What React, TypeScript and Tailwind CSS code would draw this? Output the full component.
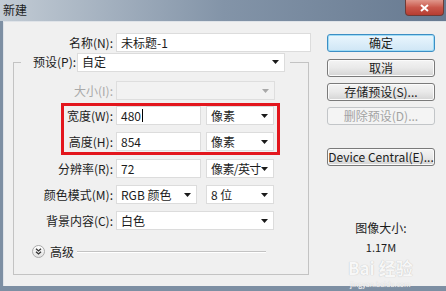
import React from 'react';

const FONT = "font-['Noto_Sans_CJK_SC','Noto_Sans',sans-serif]";

function Caret({ disabled = false }: { disabled?: boolean }) {
  return (
    <svg width="7" height="4" viewBox="0 0 7 4" className="shrink-0">
      <path d="M0 0 H7 L3.5 4 Z" fill={disabled ? '#a8a8a8' : '#1a1a1a'} />
    </svg>
  );
}

function Field({ w, value, select, disabled, caret, tight }: { w: string; value?: string; select?: boolean; disabled?: boolean; caret?: boolean; tight?: boolean }) {
  return (
    <div
      className={`${w} h-[19px] flex items-center justify-between pl-[4px] pr-[5px] border ${
        disabled ? 'bg-[#f2f2f2] border-[#dedede]' : 'bg-white border-[#dcdcdc]'
      }`}
    >
      <span className={`whitespace-nowrap text-[12px] leading-none text-[#1c1c1c] flex items-center ${tight ? 'tracking-[-0.6px]' : ''}`}>
        {value}
        {caret && <span className="inline-block w-px h-[13px] bg-black ml-px" />}
      </span>
      {select && <Caret disabled={disabled} />}
    </div>
  );
}

function Row({ label, disabled, children }: { label: string; disabled?: boolean; children: React.ReactNode }) {
  return (
    <div className="flex items-center h-[19px]">
      <div className={`w-[99px] text-right text-[12px] leading-none ${disabled ? 'text-[#a9a9a9]' : 'text-[#1c1c1c]'}`}>{label}</div>
      <div className="ml-[3px] flex items-center gap-[5px]">{children}</div>
    </div>
  );
}

function Button({ label, primary, disabled }: { label: string; primary?: boolean; disabled?: boolean }) {
  const tone = disabled
    ? 'border-[#c2c5c8] bg-[#f4f4f4] text-[#a3a3a3]'
    : primary
    ? 'border-[#3c8ec4] bg-gradient-to-b from-[#eaf6fd] to-[#cfe6f5] text-[#1c1c1c] shadow-[inset_0_0_0_1px_#9fdcf6]'
    : 'border-[#7a7a7a] bg-gradient-to-b from-[#f4f4f4] via-[#e9e9e9] to-[#d4d4d4] text-[#1c1c1c] shadow-[inset_0_0_0_1px_#fbfbfb]';
  return (
    <div className={`w-[108px] h-[18px] rounded-[3px] border flex items-center justify-center whitespace-nowrap text-[12px] leading-none ${tone}`}>
      {label}
    </div>
  );
}

export default function App() {
  return (
    <div className={`${FONT} w-[446px] h-[291px] bg-[#7d8fa3] flex flex-col overflow-hidden relative`}>
      {/* Title bar */}
      <div className="h-[21px] flex justify-between bg-gradient-to-r from-[#c3ccd5] via-[#8394a8] to-[#677a91]">
        <span className="pl-[3px] pt-[4px] text-[12px] leading-none text-[#1e1e1e]">新建</span>
        <div className="w-[39px] h-[16px] mr-[2px] rounded-b-[4px] border border-t-0 border-[#6e3b36] bg-gradient-to-b from-[#e0978c] via-[#c9574b] to-[#b63d31] flex items-center justify-center">
          <svg width="9" height="8" viewBox="0 0 9 8">
            <path d="M1 1 L8 7 M8 1 L1 7" stroke="#ffffff" strokeWidth="2" />
          </svg>
        </div>
      </div>

      {/* Body */}
      <div className="flex-1 ml-[3px] mb-[5px] bg-[#f0f0f0] border-t border-l border-[#dfe3e8] flex">
        {/* Left column */}
        <div className="ml-[9px] w-[298px] pt-[11px] flex flex-col">
          <div className="flex items-center">
            <div className="w-[100px] text-right text-[12px] leading-none text-[#1c1c1c]">名称(N):</div>
            <div className="ml-[3px]">
              <Field w="w-[195px]" value="未标题-1" />
            </div>
          </div>

          {/* Group box */}
          <div className="relative mt-[10px] w-[296px] h-[213px] border-l border-r border-b border-[#c3c3c3]">
            <div className="-mt-[9px] h-[18px] flex items-center">
              <div className="w-[7px] h-px bg-[#c3c3c3]" />
              <div className="ml-[12px] w-[44px] text-[12px] leading-none text-[#1c1c1c]">预设(P):</div>
              <Field w="w-[208px]" value="自定" select />
              <div className="ml-[5px] flex-1 h-px bg-[#c3c3c3]" />
            </div>

            <div className="mt-[10px]">
              <Row label="大小(I):" disabled>
                <Field w="w-[159px]" select disabled />
              </Row>
            </div>
            <div className="mt-[6px]">
              <Row label="宽度(W):">
                <Field w="w-[85px]" value="480" caret />
                <Field w="w-[68px]" value="像素" select />
              </Row>
            </div>
            <div className="mt-[7px]">
              <Row label="高度(H):">
                <Field w="w-[85px]" value="854" />
                <Field w="w-[68px]" value="像素" select />
              </Row>
            </div>
            <div className="mt-[8px]">
              <Row label="分辨率(R):">
                <Field w="w-[85px]" value="72" />
                <Field w="w-[68px]" value="像素/英寸" select tight />
              </Row>
            </div>
            <div className="mt-[7px]">
              <Row label="颜色模式(M):">
                <Field w="w-[81px]" value="RGB 颜色" select />
                <div className="ml-[4px]">
                  <Field w="w-[68px]" value="8 位" select />
                </div>
              </Row>
            </div>
            <div className="mt-[7px]">
              <Row label="背景内容(C):">
                <Field w="w-[158px]" value="白色" select />
              </Row>
            </div>

            {/* Advanced */}
            <div className="mt-[15px] h-[13px] flex items-center">
              <div className="ml-[18px] w-[13px] h-[13px] rounded-full border border-[#a9a9a9] bg-gradient-to-b from-white to-[#e2e2e2] flex items-center justify-center">
                <svg width="7" height="7" viewBox="0 0 7 7">
                  <path d="M1 0.8 L3.5 3 L6 0.8 M1 3.8 L3.5 6 L6 3.8" stroke="#333" strokeWidth="1.3" fill="none" />
                </svg>
              </div>
              <span className="ml-[5px] text-[12px] leading-none text-[#1c1c1c]">高级</span>
              <div className="ml-[3px] w-[189px] h-[2px] border-t border-[#c3c3c3] border-b border-b-white" />
            </div>

            {/* Red annotation */}
            <div className="pointer-events-none absolute left-[47px] top-[41px] w-[219px] h-[52px] border-[3px] border-[#e3161d]" />
          </div>
        </div>

        {/* Right column */}
        <div className="ml-[16px] w-[108px] pt-[12px] flex flex-col">
          <Button label="确定" primary />
          <div className="mt-[7px]"><Button label="取消" /></div>
          <div className="mt-[6px]"><Button label="存储预设(S)..." /></div>
          <div className="mt-[6px]"><Button label="删除预设(D)..." disabled /></div>
          <div className="mt-[23px]"><Button label="Device Central(E)..." /></div>
          <div className="mt-[56px] text-center text-[12px] leading-none text-[#1c1c1c]">图像大小:</div>
          <div className="mt-[8px] text-center text-[11px] leading-none text-[#1c1c1c]">1.17M</div>
        </div>
      </div>

      {/* Watermark */}
      <div className="pointer-events-none absolute left-[348px] top-[259px] flex flex-col items-center gap-[5px]">
        <span className="text-[17px] leading-none font-bold text-[#f7f7f7] [text-shadow:0_0_1px_#b5b5b5]">Bai 经验</span>
        <span className="text-[7px] leading-none text-[#f7f7f7] [text-shadow:0_0_1px_#c5c5c5]">jingyan.baidu.com</span>
      </div>
    </div>
  );
}
